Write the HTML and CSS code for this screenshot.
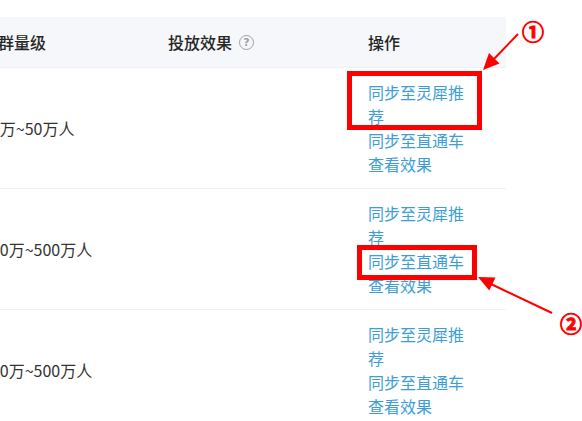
FILE: index.html
```html
<!DOCTYPE html>
<html lang="zh-CN">
<head>
<meta charset="utf-8">
<title>人群列表</title>
<link rel="stylesheet" href="styles.css">
</head>
<body>
<div class="page">
  <div class="table">
    <div class="row head">
      <div class="cell c1">人群量级</div>
      <div class="cell c2">投放效果<span class="q">?</span></div>
      <div class="cell c3">操作</div>
    </div>
    <div class="row">
      <div class="cell c1">10万~50万人</div>
      <div class="cell c2"></div>
      <div class="cell c3">
        <div class="links">
          <a class="link">同步至灵犀推荐</a>
          <a class="link">同步至直通车</a>
          <a class="link">查看效果</a>
        </div>
      </div>
    </div>
    <div class="row">
      <div class="cell c1">100万~500万人</div>
      <div class="cell c2"></div>
      <div class="cell c3">
        <div class="links">
          <a class="link">同步至灵犀推荐</a>
          <a class="link">同步至直通车</a>
          <a class="link">查看效果</a>
        </div>
      </div>
    </div>
    <div class="row">
      <div class="cell c1">100万~500万人</div>
      <div class="cell c2"></div>
      <div class="cell c3">
        <div class="links">
          <a class="link">同步至灵犀推荐</a>
          <a class="link">同步至直通车</a>
          <a class="link">查看效果</a>
        </div>
      </div>
    </div>
  </div>
  <svg class="overlay" width="582" height="421" viewBox="0 0 582 421">
    <rect x="349.5" y="73.5" width="130" height="54" fill="none" stroke="#ff0000" stroke-width="5"/>
    <rect x="359.5" y="247.5" width="115" height="30" fill="none" stroke="#ff0000" stroke-width="5"/>
    <line x1="518" y1="34" x2="493" y2="60" stroke="#ff0000" stroke-width="2"/>
    <polygon points="483,70 499.5,63.5 489,53" fill="#ff0000"/>
    <line x1="552" y1="313" x2="491" y2="284" stroke="#ff0000" stroke-width="2"/>
    <polygon points="478,277 495.5,277.5 489.3,290.5" fill="#ff0000"/>
    <text class="num" x="533" y="40" text-anchor="middle">①</text>
    <text class="num" x="571" y="332" text-anchor="middle">②</text>
  </svg>
</div>
</body>
</html>
```

FILE: styles.css
```css
html, body {
  margin: 0;
  padding: 0;
  background: #ffffff;
}
body {
  font-family: "Noto Sans CJK SC", "Noto Sans", sans-serif;
  font-size: 16px;
  color: #333333;
  overflow: hidden;
}
.page {
  position: relative;
  width: 582px;
  height: 421px;
  overflow: hidden;
}
.table {
  margin-top: 17px;
  margin-left: -18px;
  width: 524px;
}
.row {
  display: grid;
  grid-template-columns: 186px 200px 138px;
  border-bottom: 1px solid #eef0f3;
  padding: 12px 0 12px;
  align-items: center;
}
.row.head {
  background: #f5f7fa;
  height: 51px;
  padding: 0;
  box-sizing: border-box;
  border-bottom: 1px solid #edf0f4;
  color: #262626;
  font-weight: 500;
}
.cell {
  white-space: nowrap;
  line-height: 24px;
}
.c2 {
  display: flex;
  align-items: center;
}
.q {
  display: inline-flex;
  align-items: center;
  justify-content: center;
  box-sizing: border-box;
  width: 15px;
  height: 15px;
  margin-left: 7px;
  border: 1.5px solid #a0a0a0;
  border-radius: 50%;
  font-size: 11px;
  font-weight: 700;
  line-height: 1;
  color: #a0a0a0;
  font-family: "DejaVu Sans", sans-serif;
}
.links {
  width: 104px;
  white-space: normal;
  display: flex;
  flex-direction: column;
}
.link {
  color: #3d9ed6;
  line-height: 24px;
  cursor: pointer;
}
.overlay {
  position: absolute;
  left: 0;
  top: 0;
  pointer-events: none;
}
.num {
  fill: #ff0000;
  stroke: #ff0000;
  stroke-width: 1;
  font-size: 22px;
  font-weight: 700;
  font-family: "Noto Sans CJK SC", "DejaVu Sans", sans-serif;
}
```
